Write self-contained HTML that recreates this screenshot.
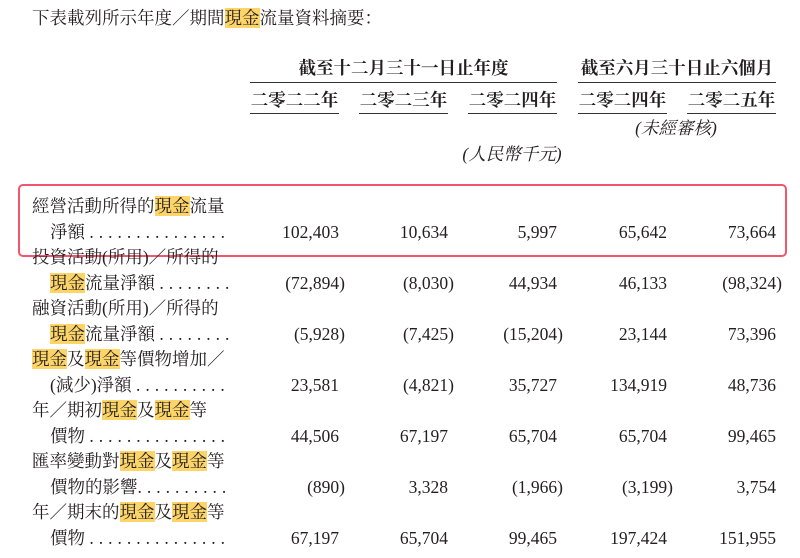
<!DOCTYPE html>
<html><head><meta charset="utf-8"><style>
body{margin:0;width:800px;height:558px;background:#fff;position:relative;overflow:hidden;font-family:"Liberation Serif","Noto Serif CJK SC","Noto Sans CJK TC",serif;color:#231f20;font-size:17.5px}
.a{position:absolute;white-space:nowrap;line-height:25.5px}
.h{background:#fcd468}
.l{position:absolute;height:1px;background:#333}
.n{position:absolute;text-align:right;width:100px;line-height:25.5px;white-space:nowrap}
.p{margin-right:-6px}
.b{font-weight:bold}
.i{font-style:italic}
.d{letter-spacing:5px}
</style></head><body>
<div class="a" style="left:32px;top:6px">下表載列所示年度／期間<span class="h">現金</span>流量資料摘要：</div>
<div class="a b" style="left:250px;width:307px;text-align:center;top:56px">截至十二月三十一日止年度</div>
<div class="a b" style="left:578px;width:198px;text-align:center;top:56px">截至六月三十日止六個月</div>
<div class="l" style="left:250px;width:307px;top:82px"></div>
<div class="l" style="left:578px;width:198px;top:82px"></div>
<div class="a b" style="left:250px;width:89px;text-align:center;top:88px">二零二二年</div>
<div class="a b" style="left:359px;width:89px;text-align:center;top:88px">二零二三年</div>
<div class="a b" style="left:468px;width:89px;text-align:center;top:88px">二零二四年</div>
<div class="a b" style="left:578px;width:89px;text-align:center;top:88px">二零二四年</div>
<div class="a b" style="left:687px;width:89px;text-align:center;top:88px">二零二五年</div>
<div class="l" style="left:250px;width:89px;top:113px"></div>
<div class="l" style="left:359px;width:89px;top:113px"></div>
<div class="l" style="left:468px;width:89px;top:113px"></div>
<div class="l" style="left:578px;width:89px;top:113px"></div>
<div class="l" style="left:687px;width:89px;top:113px"></div>
<div class="a i" style="left:626px;width:100px;text-align:center;top:116px">(未經審核)</div>
<div class="a i" style="left:462px;width:100px;text-align:center;top:142px">(人民幣千元)</div>
<div style="position:absolute;left:18px;top:184px;width:765px;height:69px;border:2px solid #f0566e;border-radius:5px"></div>

<div class="a" style="left:32px;top:194px">經營活動所得的<span class="h">現金</span>流量</div>
<div class="a" style="left:50px;top:219.5px">淨額 <span class="d">...............</span></div>
<div class="a" style="left:32px;top:245px">投資活動(所用)／所得的</div>
<div class="a" style="left:50px;top:270.5px"><span class="h">現金</span>流量淨額 <span class="d">........</span></div>
<div class="a" style="left:32px;top:296px">融資活動(所用)／所得的</div>
<div class="a" style="left:50px;top:321.5px"><span class="h">現金</span>流量淨額 <span class="d">........</span></div>
<div class="a" style="left:32px;top:347px"><span class="h">現金</span>及<span class="h">現金</span>等價物增加／</div>
<div class="a" style="left:50px;top:372.5px">(減少)淨額 <span class="d">..........</span></div>
<div class="a" style="left:32px;top:398px">年／期初<span class="h">現金</span>及<span class="h">現金</span>等</div>
<div class="a" style="left:50px;top:423.5px">價物 <span class="d">...............</span></div>
<div class="a" style="left:32px;top:449px">匯率變動對<span class="h">現金</span>及<span class="h">現金</span>等</div>
<div class="a" style="left:50px;top:474.5px">價物的影響<span class="d">..........</span></div>
<div class="a" style="left:32px;top:500px">年／期末的<span class="h">現金</span>及<span class="h">現金</span>等</div>
<div class="a" style="left:50px;top:525.5px">價物 <span class="d">...............</span></div>

<div class="n" style="left:239px;top:219.5px">102,403</div><div class="n" style="left:348px;top:219.5px">10,634</div><div class="n" style="left:457px;top:219.5px">5,997</div><div class="n" style="left:567px;top:219.5px">65,642</div><div class="n" style="left:676px;top:219.5px">73,664</div>
<div class="n" style="left:239px;top:270.5px">(72,894<span class="p">)</span></div><div class="n" style="left:348px;top:270.5px">(8,030<span class="p">)</span></div><div class="n" style="left:457px;top:270.5px">44,934</div><div class="n" style="left:567px;top:270.5px">46,133</div><div class="n" style="left:676px;top:270.5px">(98,324<span class="p">)</span></div>
<div class="n" style="left:239px;top:321.5px">(5,928<span class="p">)</span></div><div class="n" style="left:348px;top:321.5px">(7,425<span class="p">)</span></div><div class="n" style="left:457px;top:321.5px">(15,204<span class="p">)</span></div><div class="n" style="left:567px;top:321.5px">23,144</div><div class="n" style="left:676px;top:321.5px">73,396</div>
<div class="n" style="left:239px;top:372.5px">23,581</div><div class="n" style="left:348px;top:372.5px">(4,821<span class="p">)</span></div><div class="n" style="left:457px;top:372.5px">35,727</div><div class="n" style="left:567px;top:372.5px">134,919</div><div class="n" style="left:676px;top:372.5px">48,736</div>
<div class="n" style="left:239px;top:423.5px">44,506</div><div class="n" style="left:348px;top:423.5px">67,197</div><div class="n" style="left:457px;top:423.5px">65,704</div><div class="n" style="left:567px;top:423.5px">65,704</div><div class="n" style="left:676px;top:423.5px">99,465</div>
<div class="n" style="left:239px;top:474.5px">(890<span class="p">)</span></div><div class="n" style="left:348px;top:474.5px">3,328</div><div class="n" style="left:457px;top:474.5px">(1,966<span class="p">)</span></div><div class="n" style="left:567px;top:474.5px">(3,199<span class="p">)</span></div><div class="n" style="left:676px;top:474.5px">3,754</div>
<div class="n" style="left:239px;top:525.5px">67,197</div><div class="n" style="left:348px;top:525.5px">65,704</div><div class="n" style="left:457px;top:525.5px">99,465</div><div class="n" style="left:567px;top:525.5px">197,424</div><div class="n" style="left:676px;top:525.5px">151,955</div>
</body></html>
